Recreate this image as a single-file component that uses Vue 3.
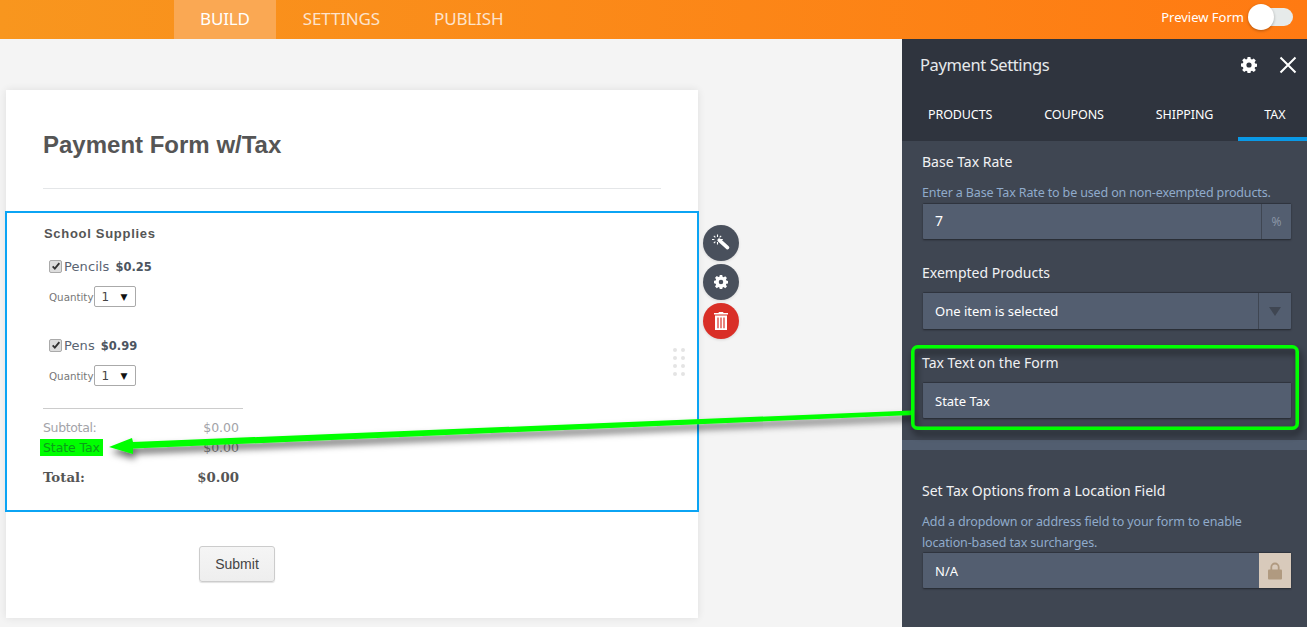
<script setup>
const dots = [0,1,2,3,4,5,6,7]
</script>

<template>
  <div class="page">
    <header class="topbar">
      <nav class="nav">
        <a class="nav-item active">BUILD</a>
        <a class="nav-item">SETTINGS</a>
        <a class="nav-item">PUBLISH</a>
      </nav>
      <div class="preview">
        <span>Preview Form</span>
        <span class="toggle"><span class="knob"></span></span>
      </div>
    </header>

    <div class="main">
      <section class="canvas">
        <div class="card">
          <div class="title-block">
            <h1>Payment Form w/Tax</h1>
          </div>
          <div class="selected">
            <div class="question">School Supplies</div>
            <div class="product">
              <span class="check"><svg viewBox="0 0 12 12" width="10" height="10"><path d="M2 6.5 4.6 9.2 10 2.6" fill="none" stroke="#333" stroke-width="2.2"/></svg></span>
              <span class="pname">Pencils</span> <b class="price">$0.25</b>
            </div>
            <div class="qty"><span>Quantity</span><span class="sel"><i>1</i><em>▼</em></span></div>
            <div class="product second">
              <span class="check"><svg viewBox="0 0 12 12" width="10" height="10"><path d="M2 6.5 4.6 9.2 10 2.6" fill="none" stroke="#333" stroke-width="2.2"/></svg></span>
              <span class="pname">Pens</span> <b class="price">$0.99</b>
            </div>
            <div class="qty"><span>Quantity</span><span class="sel"><i>1</i><em>▼</em></span></div>
            <div class="totals">
              <div class="row"><span class="sub">Subtotal:</span><span>$0.00</span></div>
              <div class="row tax"><span class="hl">State Tax</span><span>$0.00</span></div>
              <div class="row total"><span>Total:</span><span>$0.00</span></div>
            </div>
            <div class="grip"><span v-for="d in dots" :key="d"></span></div>
          </div>
          <div class="submit-row"><button class="submit">Submit</button></div>

          <div class="tools">
            <span class="tool">
              <svg viewBox="0 0 20 20" width="20" height="20">
                <path d="M8.2 7.2 16.5 14.6" stroke="#fff" stroke-width="3.6" stroke-linecap="round"/>
                <path d="M6.5 1.5v2.4M6.5 9v2.4M1 6.5h2.4M9.6 6.5h2.2M2.8 2.8l1.6 1.6M2.8 10.2l1.6-1.6M10.2 2.8 8.6 4.4" stroke="#fff" stroke-width="1.1"/>
              </svg>
            </span>
            <span class="tool">
              <svg viewBox="0 0 16 16" width="14" height="14">
                <path fill="#fff" fill-rule="evenodd" d="M6.6 0h2.8l.4 2.1 1.2.5 1.8-1.2 2 2-1.2 1.8.5 1.2 2.1.4v2.8l-2.1.4-.5 1.2 1.2 1.8-2 2-1.8-1.2-1.2.5-.4 2.1H6.6l-.4-2.1-1.2-.5-1.8 1.2-2-2 1.2-1.8-.5-1.2L-.2 9.4V6.6l2.1-.4.5-1.2-1.2-1.8 2-2 1.8 1.2 1.2-.5zM8 5.4a2.6 2.6 0 1 0 0 5.2 2.6 2.6 0 0 0 0-5.2z"/>
              </svg>
            </span>
            <span class="tool danger">
              <svg viewBox="0 0 14 18" width="14" height="18">
                <path fill="#fff" d="M5 0h4l.6 1H14v1.6H0V1h4.4z"/>
                <path fill="#fff" fill-rule="evenodd" d="M1 3.6h12V18H1zM3.4 5.4v10.8h1.2V5.4zM6.4 5.4v10.8h1.2V5.4zM9.4 5.4v10.8h1.2V5.4z"/>
              </svg>
            </span>
          </div>
        </div>
      </section>

      <aside class="panel">
        <div class="panel-head">
          <div class="panel-title">
            <span>Payment Settings</span>
            <span class="panel-icons">
              <svg viewBox="0 0 16 16" width="16" height="16">
                <path fill="#fff" fill-rule="evenodd" d="M6.6 0h2.8l.4 2.1 1.2.5 1.8-1.2 2 2-1.2 1.8.5 1.2 2.1.4v2.8l-2.1.4-.5 1.2 1.2 1.8-2 2-1.8-1.2-1.2.5-.4 2.1H6.6l-.4-2.1-1.2-.5-1.8 1.2-2-2 1.2-1.8-.5-1.2L-.2 9.4V6.6l2.1-.4.5-1.2-1.2-1.8 2-2 1.8 1.2 1.2-.5zM8 5.4a2.6 2.6 0 1 0 0 5.2 2.6 2.6 0 0 0 0-5.2z"/>
              </svg>
              <svg viewBox="0 0 18 18" width="18" height="18">
                <path d="M1.5 1.5 16.5 16.5M16.5 1.5 1.5 16.5" stroke="#fff" stroke-width="2"/>
              </svg>
            </span>
          </div>
          <div class="tabs">
            <span class="tab">PRODUCTS</span>
            <span class="tab">COUPONS</span>
            <span class="tab">SHIPPING</span>
            <span class="tab on">TAX</span>
          </div>
        </div>
        <div class="panel-body">
          <div class="block">
            <div class="label">Base Tax Rate</div>
            <div class="desc">Enter a Base Tax Rate to be used on non-exempted products.</div>
            <div class="field"><span class="val first">7</span><span class="addon pct">%</span></div>
            <div class="label l2">Exempted Products</div>
            <div class="field dd"><span class="val">One item is selected</span><span class="addon arrow"><i></i></span></div>
            <div class="label l3">Tax Text on the Form</div>
            <div class="field"><span class="val">State Tax</span></div>
          </div>
          <div class="divider"></div>
          <div class="block b2">
            <div class="label">Set Tax Options from a Location Field</div>
            <div class="desc two">Add a dropdown or address field to your form to enable<br>location-based tax surcharges.</div>
            <div class="field"><span class="val">N/A</span><span class="addon lock">
              <svg viewBox="0 0 14 18" width="14" height="18">
                <path d="M3.3 8V5.2a3.7 3.7 0 0 1 7.4 0V8" fill="none" stroke="#b09a80" stroke-width="1.8"/>
                <rect x="0" y="7.5" width="14" height="10" rx="1" fill="#b09a80"/>
              </svg>
            </span></div>
          </div>
        </div>
      </aside>
    </div>

    <svg class="annot" width="1307" height="627" viewBox="0 0 1307 627">
      <defs>
        <filter id="sh" x="-5%" y="-100%" width="110%" height="300%">
          <feDropShadow dx="2" dy="5" stdDeviation="3.5" flood-color="#000" flood-opacity=".6"/>
        </filter>
      </defs>
      <polygon filter="url(#sh)" fill="#00ff00" points="109,447 132,438 133,442 912,410.5 912,415 133,448.5 133,454"/>
      <rect x="912.75" y="346.75" width="384.5" height="81.5" rx="5" fill="none" stroke="#00ff00" stroke-width="3.5" filter="url(#sh)"/>
    </svg>
  </div>
</template>

<style>
html, body { margin: 0; padding: 0; overflow: hidden; }
</style>

<style scoped>
.page { position: relative; width: 1307px; height: 627px; overflow: hidden; background: #f4f4f4; display: flex; flex-direction: column; font-family: "Liberation Sans", sans-serif; }
.topbar { height: 39px; flex: none; display: flex; justify-content: space-between; align-items: stretch; background: linear-gradient(90deg, #f8961e, #ff7a12); color: #fff; font-family: "Open Sans", sans-serif; }
.nav { display: flex; margin-left: 174px; }
.nav-item { padding: 0 27px; line-height: 37px; font-size: 17px; color: #fde3cc; font-family: "Noto Sans", sans-serif; letter-spacing: -.15px; }
.nav-item.active { background: #faa853; color: #fff; padding: 0 26px; }
.preview { display: flex; align-items: center; gap: 5px; font-size: 13px; padding-right: 14px; padding-bottom: 5px; font-family: "Noto Sans", sans-serif; }
.toggle { position: relative; display: block; width: 44px; height: 18px; background: #e6eaea; border-radius: 9px; }
.knob { position: absolute; left: -1px; top: -4px; width: 26px; height: 26px; border-radius: 50%; background: #fff; box-shadow: 0 1px 3px rgba(0,0,0,.3); }
.main { flex: 1; display: flex; min-height: 0; }
.canvas { width: 902px; flex: none; padding: 51px 0 0 6px; box-sizing: border-box; }
.card { position: relative; width: 692px; height: 528px; background: #fff; box-shadow: 0 0 8px rgba(0,0,0,.09); box-sizing: border-box; }
.title-block { margin: 0 37px 0 37px; height: 99px; box-sizing: border-box; border-bottom: 1px solid #e4e6e8; }
h1 { margin: 0; padding-top: 41px; font-size: 24px; line-height: 28px; font-weight: 700; color: #555; }
.selected { position: relative; margin: 22px -1px 0; height: 301px; box-sizing: border-box; border: 2px solid #0ba4f4; padding: 13px 0 0 37px; font-family: "DejaVu Sans", sans-serif; color: #555f6e; }
.question { font-family: "Liberation Sans", sans-serif; font-weight: 700; font-size: 13px; line-height: 16px; letter-spacing: .7px; color: #555; }
.product { display: flex; align-items: center; height: 18px; margin: 15px 0 0 5px; font-size: 13px; gap: 4px; }
.product.second { margin-top: 29px; }
.check { width: 11px; height: 11px; border: 1px solid #aaa; border-radius: 2px; background: #ddd; display: flex; align-items: center; justify-content: center; margin-right: -2px; flex: none; }
.pname { color: #5a6472; letter-spacing: .1px; }
.price { font-size: 11.5px; color: #4d5560; margin-left: 2px; padding-top: 1px; }
.qty { display: flex; align-items: center; margin: 11px 0 0 5px; font-size: 10.3px; color: #777; height: 21px; }
.sel { display: flex; justify-content: space-between; align-items: center; height: 21px; border: 1px solid #aaa; border-radius: 2px; padding: 0 7px; box-sizing: border-box; width: 42px; font-size: 12px; color: #444; }
.sel i { font-style: normal; }
.sel em { font-style: normal; font-size: 9px; color: #111; }
.totals { width: 200px; margin: 22px 0 0 -1px; border-top: 1px solid #ccc; padding-top: 8px; font-size: 12.5px; color: #a3a3a8; }
.row { display: flex; justify-content: space-between; padding-right: 4px; height: 20px; align-items: center; }
.sub { letter-spacing: -.35px; }
.tax { color: #8a8a8a; }
.hl { background: #00ff00; color: #0b9c1a; margin-left: -3px; padding: 0 3px 0 3px; height: 17px; line-height: 17px; letter-spacing: -.1px; }
.total { margin-top: 10px; font-family: "DejaVu Serif", serif; font-weight: 700; font-size: 13.3px; color: #555; }
.grip { position: absolute; left: 666px; top: 135px; display: grid; grid-template-columns: 4px 4px; gap: 4px; }
.grip span { width: 4px; height: 4px; border-radius: 50%; background: #e4e4e4; }
.submit-row { display: flex; padding: 34px 0 0 193px; }
.submit { width: 76px; height: 36px; background: linear-gradient(#f5f5f5, #eee); border: 1px solid #ccc; border-radius: 3px; font-family: "Liberation Sans", sans-serif; font-size: 14px; color: #444; box-shadow: 0 1px 1px rgba(0,0,0,.12); padding: 0; }
.tools { position: absolute; left: 697px; top: 135px; display: flex; flex-direction: column; gap: 3px; }
.tool { width: 36px; height: 36px; border-radius: 50%; background: #49505c; display: flex; align-items: center; justify-content: center; box-shadow: 0 1px 3px rgba(0,0,0,.12); }
.danger { background: #d92f27; }
.panel { flex: 1; background: #3f4652; color: #fff; font-family: "Noto Sans", sans-serif; display: flex; flex-direction: column; }
.panel-head { background: #2f343e; height: 102px; flex: none; display: flex; flex-direction: column; justify-content: space-between; }
.panel-title { display: flex; justify-content: space-between; align-items: center; padding: 14px 10px 0 18px; font-size: 16.5px; line-height: 23px; color: #e6e9ec; letter-spacing: -.4px; }
.panel-icons { display: flex; align-items: center; gap: 22px; margin-right: 0; }
.tabs { display: flex; }
.tab { padding: 0 26px; height: 41px; line-height: 29px; box-sizing: border-box; font-size: 12.5px; color: #fff; white-space: nowrap; letter-spacing: -.1px; flex: none; }
.tab.on { border-bottom: 4px solid #0a99e6; padding-right: 0; flex: 1; margin-left: -1px; }
.panel-body { flex: 1; }
.block { padding: 11px 16px 0 21px; height: 299px; box-sizing: border-box; }
.label { font-size: 14px; line-height: 20px; color: #f1f2f4; margin-left: -1px; }
.desc { margin: 11px 0 0 -1px; font-size: 12.5px; line-height: 20px; color: #90abcb; letter-spacing: -.14px; white-space: nowrap; }
.two { margin-top: 10px; margin-bottom: -1px; line-height: 21px; }
.field { display: flex; height: 36px; margin-top: 0; background: #535e70; border: 1px solid #2f343e; border-width: 1px 0 0; box-shadow: 0 1px 2px rgba(0,0,0,.45); box-sizing: border-box; justify-content: space-between; align-items: stretch; font-size: 13px; border-radius: 1px; }
.val { padding-left: 12px; line-height: 36px; letter-spacing: 0; }
.first { line-height: 34px; font-size: 14px; }
.addon { width: 30px; flex: none; display: flex; align-items: center; justify-content: center; border-left: 1px solid #3f4652; box-sizing: border-box; color: #8a95a5; }
.pct { font-size: 12px; }
.dd { height: 37px; }
.dd .addon { width: 33px; }
.arrow i { width: 0; height: 0; border-left: 6px solid transparent; border-right: 6px solid transparent; border-top: 9px solid #3f4652; }
.l2 { margin-top: 24px; margin-bottom: 9px; }
.l3 { margin-top: 24px; margin-bottom: 9px; }
.divider { height: 10px; background: #525e70; }
.b2 { padding-top: 31px; height: auto; }
.b2 .field { margin-top: 0; }
.lock { background: #d8cabb; border-left: none; width: 32px; }
.annot { position: absolute; left: 0; top: 0; pointer-events: none; }
</style>
